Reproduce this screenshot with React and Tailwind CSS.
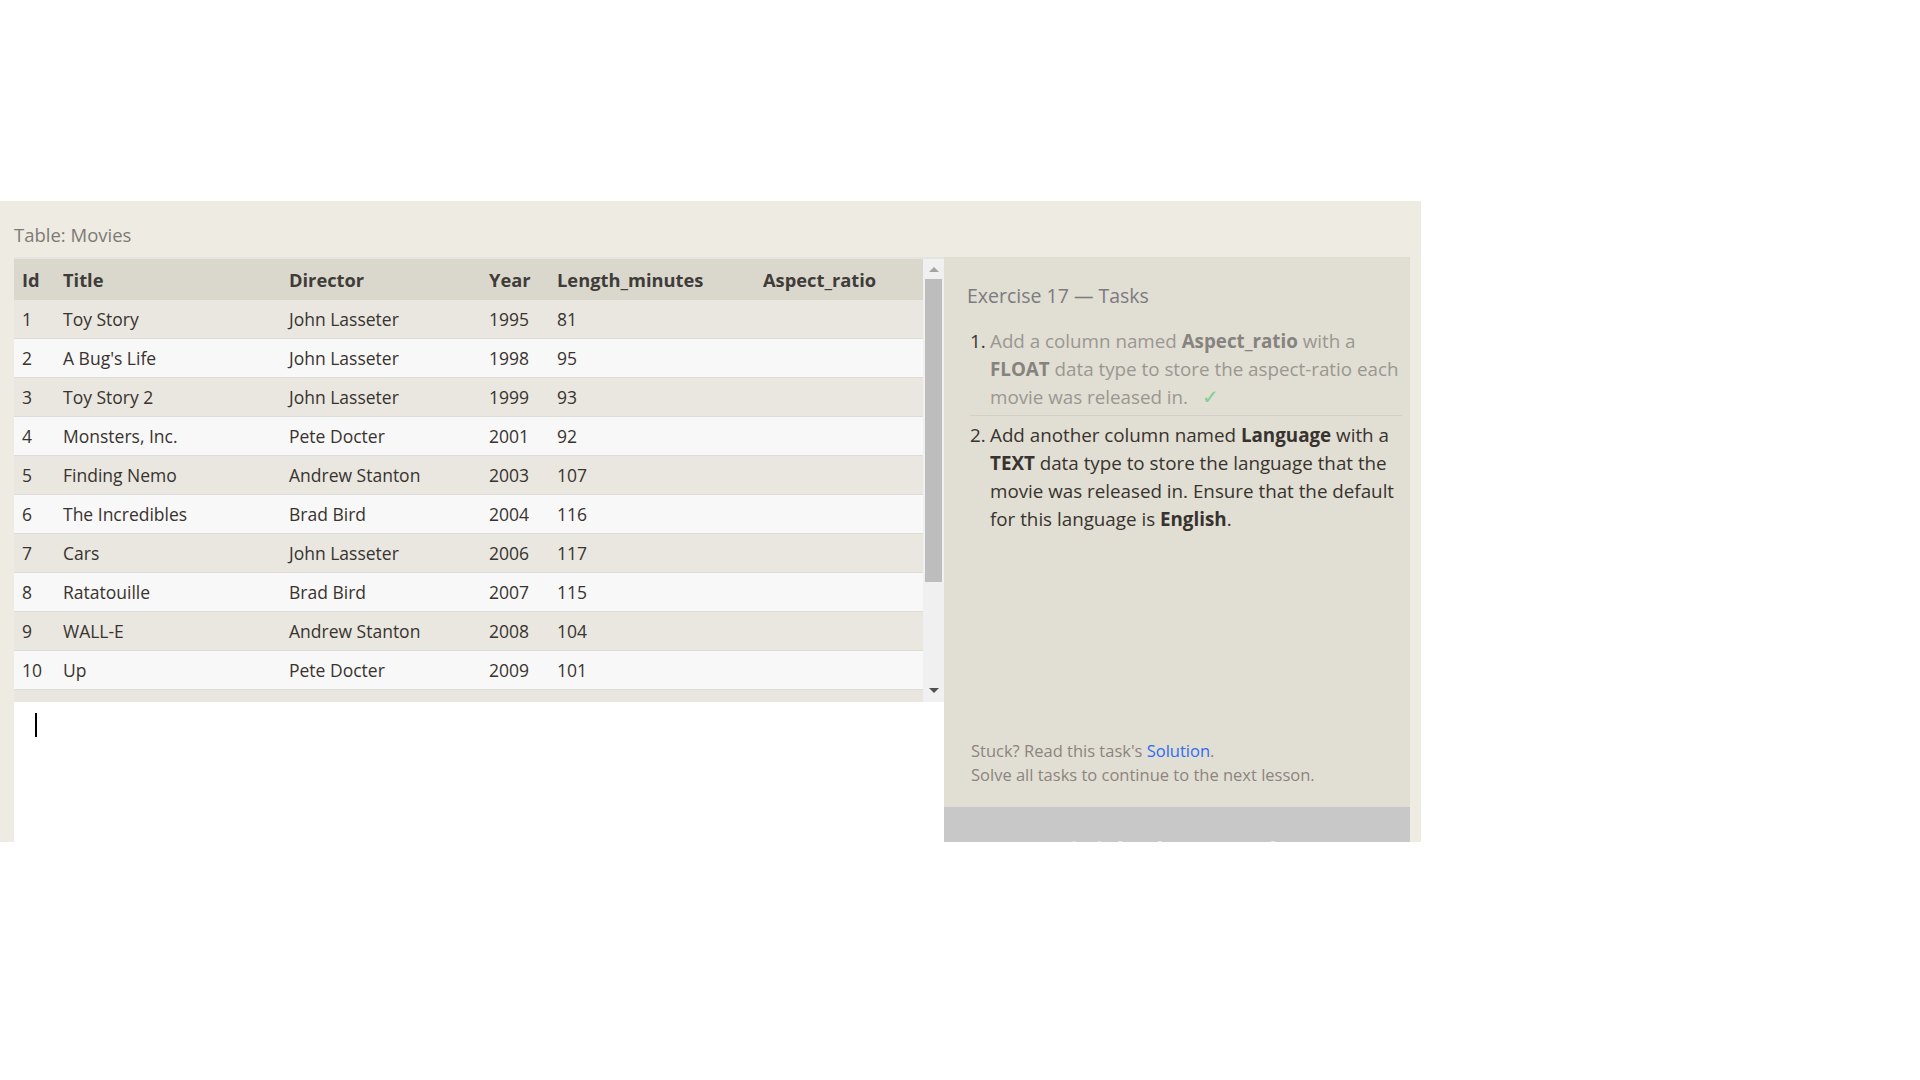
const movies = [
  [1, "Toy Story", "John Lasseter", 1995, 81],
  [2, "A Bug's Life", "John Lasseter", 1998, 95],
  [3, "Toy Story 2", "John Lasseter", 1999, 93],
  [4, "Monsters, Inc.", "Pete Docter", 2001, 92],
  [5, "Finding Nemo", "Andrew Stanton", 2003, 107],
  [6, "The Incredibles", "Brad Bird", 2004, 116],
  [7, "Cars", "John Lasseter", 2006, 117],
  [8, "Ratatouille", "Brad Bird", 2007, 115],
  [9, "WALL-E", "Andrew Stanton", 2008, 104],
  [10, "Up", "Pete Docter", 2009, 101],
];

const cols = "grid grid-cols-[41px_226px_200px_68px_206px_168px]";

function MoviesTable() {
  return (
    <div className="flex h-[445px] bg-[#e8e6de] border-t-2 border-[#e4e4e0]">
      <div className="w-[909px]">
        {/* header */}
        <div className={`${cols} h-[41px] items-center bg-[#dad8cc] text-[#403c3a] text-[18.3px] font-bold`}>
          <div className="pl-[8px]">Id</div>
          <div className="pl-[8px]">Title</div>
          <div className="pl-[8px]">Director</div>
          <div className="pl-[8px]">Year</div>
          <div className="pl-[8px]">Length_minutes</div>
          <div className="pl-[8px]">Aspect_ratio</div>
        </div>
        {movies.map((m, i) => (
          <div
            key={m[0]}
            className={`${cols} h-[39px] items-center border-b border-[#dcdcda] text-[17.5px] text-[#38332f] ${
              i % 2 === 0 ? "bg-[#e9e7e0]" : "bg-[#f8f8f8]"
            }`}
          >
            <div className="pl-[8px]">{m[0]}</div>
            <div className="pl-[8px]">{m[1]}</div>
            <div className="pl-[8px]">{m[2]}</div>
            <div className="pl-[8px]">{m[3]}</div>
            <div className="pl-[8px]">{m[4]}</div>
            <div className="pl-[8px]"></div>
          </div>
        ))}
      </div>
      {/* scrollbar */}
      <div className="w-[21px] bg-[#f0f0f0] flex flex-col items-center">
        <div className="h-[20px] flex items-center justify-center">
          <div className="w-0 h-0 border-l-[5px] border-r-[5px] border-b-[5px] border-l-transparent border-r-transparent border-b-[#a3a3a3]" />
        </div>
        <div className="w-[17px] h-[303px] bg-[#bdbdbd]" />
        <div className="flex-1" />
        <div className="h-[20px] flex items-start justify-center pt-[6px]">
          <div className="w-0 h-0 border-l-[5px] border-r-[5px] border-t-[5px] border-l-transparent border-r-transparent border-t-[#505050]" />
        </div>
      </div>
    </div>
  );
}

function Tasks() {
  return (
    <div className="w-[466px] bg-[#e1ded3] flex flex-col">
      <div className="pl-[23px] pt-[24px] text-[19.5px] text-[#7c7b80]">Exercise 17 — Tasks</div>
      <ol className="mt-[17px] pl-[26px] pr-[8px] text-[18.8px] leading-[28px]">
        <li className="flex pb-[4px] border-b border-[#d2cfc4]">
          <span className="w-[20px] shrink-0 text-[#38332f]">1.</span>
          <span className="text-[#9a9792] whitespace-nowrap">
            Add a column named <b className="text-[#86837e]">Aspect_ratio</b> with a<br />
            <b className="text-[#86837e]">FLOAT</b> data type to store the aspect-ratio each<br />
            movie was released in.
            <span className="ml-[14px] text-[20px] text-[#7fcf8f]">✓</span>
          </span>
        </li>
        <li className="flex pt-[5px]">
          <span className="w-[20px] shrink-0 text-[#38332f]">2.</span>
          <span className="text-[#38332f] whitespace-nowrap">
            Add another column named <b>Language</b> with a<br />
            <b>TEXT</b> data type to store the language that the<br />
            movie was released in. Ensure that the default<br />
            for this language is <b>English</b>.
          </span>
        </li>
      </ol>
      <div className="flex-1" />
      <div className="pl-[27px] pb-[20px] text-[16.5px] leading-[24px] text-[#8d8480]">
        <div>
          Stuck? Read this task's <span className="text-[#2f6cf0]">Solution</span>.
        </div>
        <div>Solve all tasks to continue to the next lesson.</div>
      </div>
      <div className="h-[35px] bg-[#c8c8c8] overflow-hidden flex justify-center">
        <div className="pt-[30px] text-[26px] font-bold text-[#e4e4e4] leading-[30px]">Finish above Tasks</div>
      </div>
    </div>
  );
}

export default function App() {
  return (
    <div className="w-[1920px] h-[1080px] bg-white pt-[201px]" style={{ fontFamily: '"Open Sans", "Noto Sans", sans-serif' }}>
      <div className="w-[1421px] h-[641px] bg-[#eeebe3] flex flex-col pl-[14px] pr-[11px] overflow-hidden">
        <div className="h-[56px] pt-[20px] text-[18.5px] text-[#7d7a76]">Table: Movies</div>
        <div className="flex flex-1 min-h-0">
          <div className="w-[930px] flex flex-col">
            <MoviesTable />
            <div className="flex-1 bg-white pl-[21px] pt-[11px]">
              <div className="w-[2px] h-[24px] bg-black" />
            </div>
          </div>
          <Tasks />
        </div>
      </div>
    </div>
  );
}
